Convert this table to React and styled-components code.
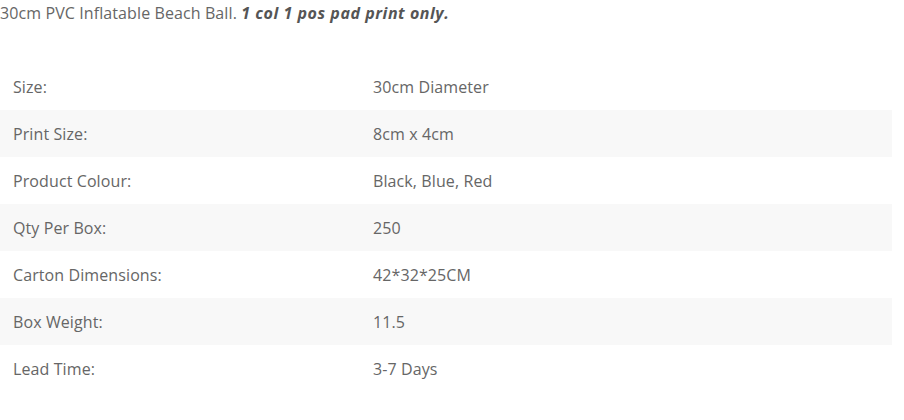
import React from "react";
import styled, { createGlobalStyle } from "styled-components";

const GlobalStyle = createGlobalStyle`
  body {
    margin: 0;
    background: #fff;
    font-family: "Open Sans", "Liberation Sans", sans-serif;
    color: #666;
  }
`;

const specs = [
  { label: "Size:", value: "30cm Diameter" },
  { label: "Print Size:", value: "8cm x 4cm" },
  { label: "Product Colour:", value: "Black, Blue, Red" },
  { label: "Qty Per Box:", value: "250" },
  { label: "Carton Dimensions:", value: "42*32*25CM" },
  { label: "Box Weight:", value: "11.5" },
  { label: "Lead Time:", value: "3-7 Days" },
];

const App = () => (
  <>
    <GlobalStyle />
    <Wrapper>
      <Intro>
        30cm PVC Inflatable Beach Ball. <strong><em>1 col 1 pos pad print only.</em></strong>
      </Intro>
      <SpecTable>
        <tbody>
          {specs.map(({ label, value }, i) => (
            <Row key={label} $striped={i % 2 === 1}>
              <Label>{label}</Label>
              <Value>{value}</Value>
            </Row>
          ))}
        </tbody>
      </SpecTable>
    </Wrapper>
  </>
);

const Wrapper = styled.div`
  width: 892px;
`;

const Intro = styled.p`
  margin: 0;
  padding-top: 2px;
  font-size: 16px;
  line-height: 22px;
  letter-spacing: 0.1px;
  color: #666;

  strong {
    color: #555;
    font-weight: 700;
    letter-spacing: 0.55px;
  }
`;

const SpecTable = styled.table`
  width: 892px;
  margin-top: 39px;
  border-collapse: collapse;
  font-size: 16px;
  letter-spacing: 0.1px;
  color: #666;
`;

const Row = styled.tr`
  height: 47px;
  background: ${({ $striped }) => ($striped ? "#f8f8f8" : "transparent")};
`;

const Label = styled.td`
  width: 347px;
  padding: 0 0 0 13px;
  vertical-align: middle;
`;

const Value = styled.td`
  padding: 0 0 0 13px;
  vertical-align: middle;
`;

export default App;
